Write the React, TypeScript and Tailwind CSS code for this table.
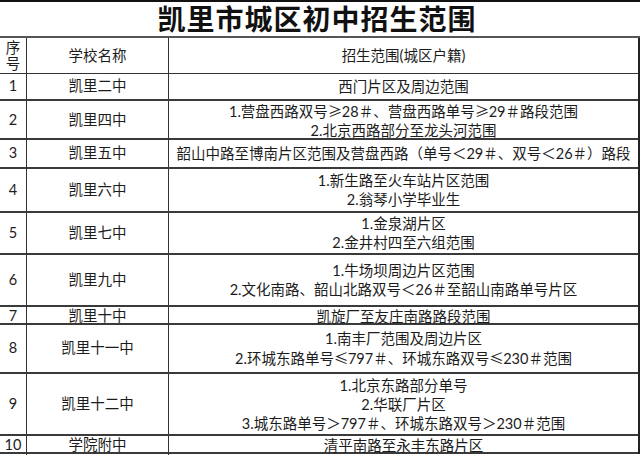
const rows: { no: string; school: string; area: string[]; h: string }[] = [
  { no: '1', school: '凯里二中', area: ['西门片区及周边范围'], h: 'h-[27px]' },
  {
    no: '2',
    school: '凯里四中',
    area: ['1.营盘西路双号≥28＃、营盘西路单号≥29＃路段范围', '2.北京西路部分至龙头河范围'],
    h: 'h-[39px]',
  },
  {
    no: '3',
    school: '凯里五中',
    area: ['韶山中路至博南片区范围及营盘西路（单号＜29＃、双号＜26＃）路段'],
    h: 'h-[29px]',
  },
  { no: '4', school: '凯里六中', area: ['1.新生路至火车站片区范围', '2.翁琴小学毕业生'], h: 'h-[44px]' },
  { no: '5', school: '凯里七中', area: ['1.金泉湖片区', '2.金井村四至六组范围'], h: 'h-[42px]' },
  {
    no: '6',
    school: '凯里九中',
    area: ['1.牛场坝周边片区范围', '2.文化南路、韶山北路双号＜26＃至韶山南路单号片区'],
    h: 'h-[52px]',
  },
  { no: '7', school: '凯里十中', area: ['凯旋厂至友庄南路路段范围'], h: 'h-[18px]' },
  {
    no: '8',
    school: '凯里十一中',
    area: ['1.南丰厂范围及周边片区', '2.环城东路单号≤797＃、环城东路双号≤230＃范围'],
    h: 'h-[49px]',
  },
  {
    no: '9',
    school: '凯里十二中',
    area: ['1.北京东路部分单号', '2.华联厂片区', '3.城东路单号＞797＃、环城东路双号＞230＃范围'],
    h: 'h-[62px]',
  },
  { no: '10', school: '学院附中', area: ['清平南路至永丰东路片区'], h: 'h-[18px]' },
];

// ≥ / ≤ should come out wide, like the CJK font draws them
function Line({ text }: { text: string }) {
  const parts = text.split(/([≥≤])/);
  return (
    <span>
      {parts.map((p, i) =>
        p === '≥' || p === '≤' ? (
          <span key={i} className="inline-block w-[14px] text-center" style={{ fontFamily: '"Noto Sans CJK SC", sans-serif' }}>
            {p}
          </span>
        ) : (
          p
        )
      )}
    </span>
  );
}

export default function App() {
  return (
    <div
      className="h-[456px] w-[640px] overflow-hidden bg-white text-[14.5px] text-[#1c1c1c]"
      style={{ fontFamily: '"Lato", "Noto Sans CJK SC", sans-serif' }}
    >
      <div className="flex h-[38px] items-center justify-center border-t-2 border-b-2 border-t-[#111] border-b-[#555] pr-[6px]">
        <h1 className="text-[28px] font-bold leading-none tracking-[1px] text-[#111]">凯里市城区初中招生范围</h1>
      </div>
      <div className="border-r-2 border-[#222]">
        <div className="grid h-[36px] grid-cols-[27px_142px_1fr] border-b border-[#333]">
          <div className="flex flex-col items-center justify-center border-r border-[#333] leading-[16px]">
            <span>序</span>
            <span>号</span>
          </div>
          <div className="flex items-center justify-center border-r border-[#333]">学校名称</div>
          <div className="flex items-center justify-center">招生范围(城区户籍)</div>
        </div>
        {rows.map((r) => (
          <div key={r.no} className={`grid grid-cols-[27px_142px_1fr] border-b-2 border-[#3a3a3a] ${r.h}`}>
            <div className="flex items-center justify-center border-r border-[#333] leading-none">{r.no}</div>
            <div className="flex items-center justify-center border-r border-[#333] leading-none">{r.school}</div>
            <div className="flex flex-col items-center justify-center leading-[19px] whitespace-nowrap">
              {r.area.map((a) => (
                <Line key={a} text={a} />
              ))}
            </div>
          </div>
        ))}
      </div>
    </div>
  );
}
